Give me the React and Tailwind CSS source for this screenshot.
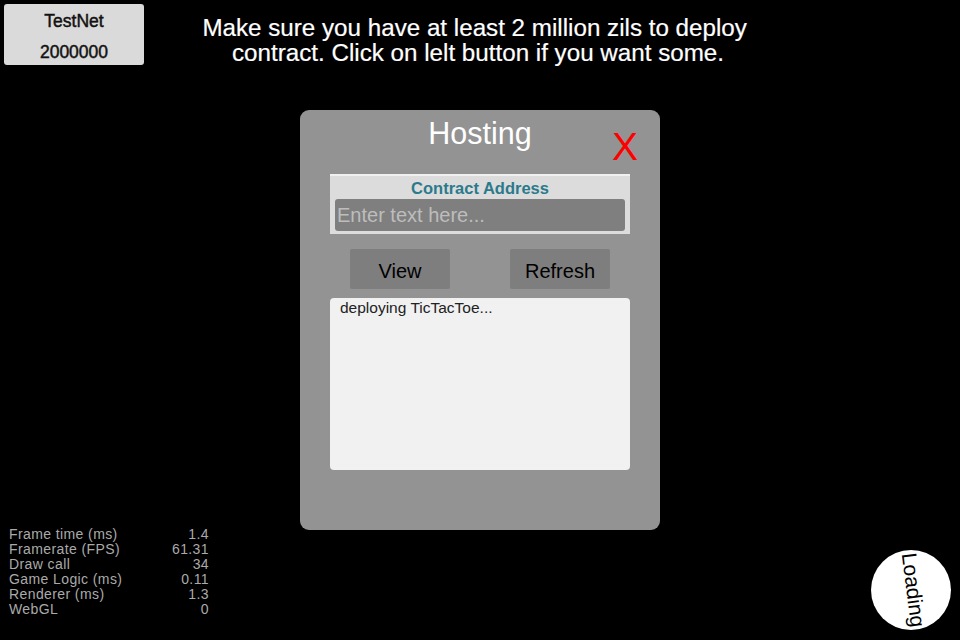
import React from "react";

const stats = [
  ["Frame time (ms)", "1.4"],
  ["Framerate (FPS)", "61.31"],
  ["Draw call", "34"],
  ["Game Logic (ms)", "0.11"],
  ["Renderer (ms)", "1.3"],
  ["WebGL", "0"],
];

export default function App() {
  return (
    <div
      className="relative w-[960px] h-[640px] bg-black overflow-hidden"
      style={{ fontFamily: '"Liberation Sans", Arial, sans-serif' }}
    >
      <div className="flex items-start">
        <div className="ml-[4px] mt-[4px] w-[140px] h-[61px] bg-[#dadada] rounded-[3px] flex flex-col items-center text-[#111] text-[17.5px] leading-[20px] pt-[7px] gap-[11px] [-webkit-text-stroke:0.45px_#111]">
          <div>TestNet</div>
          <div>2000000</div>
        </div>
        <div className="w-[664px] text-center text-white text-[24.2px] leading-[25px] pt-[15px] ml-[2px] [-webkit-text-stroke:0.2px_white]">
          Make sure you have at least 2 million zils to deploy&nbsp;
          <br />
          contract. Click on lelt button if you want some.
        </div>
      </div>

      <div className="absolute left-[300px] top-[110px] w-[360px] h-[420px] bg-[#939393] rounded-[9px] flex flex-col items-center">
        <div className="h-[37px] overflow-hidden mt-[4px] text-white text-[30.5px] leading-[38px]">
          Hosting
        </div>
        <div className="absolute right-[22px] top-[17px] text-[#ff0000] text-[39px] leading-[40px]">
          X
        </div>
        <div className="mt-[23px] w-[300px] h-[60px] bg-[#dcdcdc] border-t-2 border-[#f0f0f0] flex flex-col items-center">
          <div className="text-[#2b7a8c] font-bold text-[16.5px] leading-[20px] mt-[2px]">
            Contract Address
          </div>
          <div className="mt-[1px] w-[290px] h-[32px] bg-[#7f7f7f] rounded-[3px] flex items-center px-[2px] text-[#bdbdbd] text-[20px]">
            Enter text here...
          </div>
        </div>
        <div className="mt-[15px] w-[260px] flex justify-between">
          <div className="w-[100px] h-[40px] bg-[#7e7e7e] rounded-[2px] flex items-center justify-center text-black text-[20px] pt-[3px]">
            View
          </div>
          <div className="w-[100px] h-[40px] bg-[#7e7e7e] rounded-[2px] flex items-center justify-center text-black text-[20px] pt-[3px]">
            Refresh
          </div>
        </div>
        <div className="mt-[9px] w-[300px] h-[172px] bg-[#f1f1f1] rounded-[4px] px-[10px] pt-[1px] text-[#222] text-[15.5px] leading-[18px]">
          deploying TicTacToe...
        </div>
      </div>

      <div className="absolute left-[9px] top-[527px] w-[200px] text-[#aaaaaa] text-[14px] leading-[15px] tracking-[0.4px]">
        {stats.map(([k, v]) => (
          <div key={k} className="flex justify-between">
            <span>{k}</span>
            <span>{v}</span>
          </div>
        ))}
      </div>

      <div className="absolute left-[871px] top-[550px] w-[80px] h-[80px] rounded-full bg-white flex items-center justify-center">
        <div className="rotate-[83deg] text-black text-[21px] leading-[22px] ml-[4px]">Loading</div>
      </div>
    </div>
  );
}
